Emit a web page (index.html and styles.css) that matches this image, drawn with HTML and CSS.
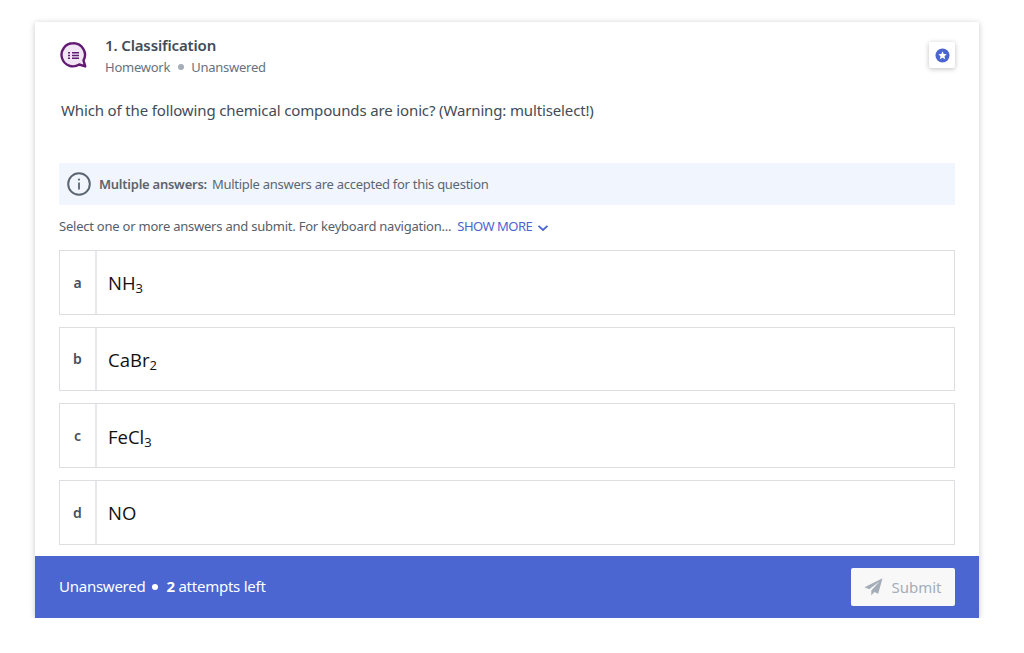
FILE: index.html
```html
<!DOCTYPE html>
<html lang="en">
<head>
  <meta charset="utf-8">
  <title>Classification</title>
  <link rel="stylesheet" href="styles.css">
</head>
<body>
  <div class="card">
    <div class="head">
      <svg class="q-icon" width="28" height="28" viewBox="0 0 28 28">
        <path d="M14 1.300a11.500 11.500 0 1 0 6.200 21.200l6 1.900-1.700-6A11.500 11.500 0 0 0 14 1.300z" fill="#f1e6f3" stroke="#621a73" stroke-width="2.400" stroke-linejoin="round"/>
        <path d="M13 10.700h7M13 13.500h7M13 16.300h7M9 10.700h2M9 13.500h2M9 16.300h2" stroke="#621a73" stroke-width="1.500" fill="none"/>
      </svg>
      <div class="head-text">
        <div class="q-title">1. Classification</div>
        <div class="q-meta"><span>Homework</span><i class="dot"></i><span>Unanswered</span></div>
      </div>
      <div class="star-btn">
        <svg width="15" height="15" viewBox="0 0 15 15">
          <circle cx="7.500" cy="7.500" r="7" fill="#4b65d1"/>
          <path d="M7.500 3.300l1.250 2.700 2.950.35-2.200 2 .6 2.900-2.600-1.450-2.600 1.450.6-2.900-2.200-2 2.950-.35z" fill="#fff"/>
        </svg>
      </div>
    </div>

    <p class="question">Which of the following chemical compounds are ionic? (Warning: multiselect!)</p>

    <div class="notice">
      <svg width="24" height="24" viewBox="0 0 24 24">
        <circle cx="12" cy="12" r="10.800" fill="none" stroke="#5b6672" stroke-width="2"/>
        <path d="M12 10.500v7" stroke="#5b6672" stroke-width="1.800"/>
        <circle cx="12" cy="7.600" r="1.100" fill="#5b6672"/>
      </svg>
      <b>Multiple answers:</b>
      <span>Multiple answers are accepted for this question</span>
    </div>

    <div class="hint">
      <span>Select one or more answers and submit. For keyboard navigation...</span>
      <a class="more">SHOW MORE
        <svg width="12" height="8" viewBox="0 0 12 8"><path d="M1.500 1.800L6 6l4.500-4.200" fill="none" stroke="#4b65d1" stroke-width="1.800"/></svg>
      </a>
    </div>

    <div class="options">
      <div class="option"><div class="letter">a</div><div class="answer">NH<sub>3</sub></div></div>
      <div class="option"><div class="letter">b</div><div class="answer">CaBr<sub>2</sub></div></div>
      <div class="option"><div class="letter">c</div><div class="answer">FeCl<sub>3</sub></div></div>
      <div class="option"><div class="letter">d</div><div class="answer">NO</div></div>
    </div>

    <div class="foot">
      <div class="status">Unanswered<i class="foot-dot"></i><b>2</b>&nbsp;attempts left</div>
      <button class="submit">
        <svg width="19" height="18" viewBox="0 0 19 18"><path d="M18.500.300L.500 9.200l4.700 2.100L15.500 3.500 7.300 12.400v5.200l3-3.600 3.900 1.800z" fill="#a4adb8"/></svg>
        Submit
      </button>
    </div>
  </div>
</body>
</html>
```

FILE: styles.css
```css
* { box-sizing: border-box; }

body {
  margin: 0;
  padding: 22px 45px 0 35px;
  background: #fff;
  font-family: "Noto Sans", sans-serif;
  color: #3d4752;
}

.card {
  background: #fff;
  box-shadow: 0 1px 6px rgba(0, 0, 0, .22);
  height: 596px;
  display: flex;
  flex-direction: column;
}

.head {
  display: flex;
  align-items: flex-start;
  padding: 13px 24px 0;
  height: 71px;
}
.q-icon { flex: none; margin-top: 7px; }
.head-text { margin-left: 18px; flex: 1; }
.q-title {
  font-size: 15px;
  font-weight: 600;
  line-height: 20px;
  letter-spacing: -.14px;
  color: #414c58;
}
.q-meta {
  display: flex;
  align-items: center;
  margin-top: 3px;
  font-size: 13px;
  line-height: 18px;
  letter-spacing: -.25px;
  color: #68727e;
}
.dot {
  width: 6px;
  height: 6px;
  margin: 0 7px 0 8px;
  border-radius: 50%;
  background: #a4adb8;
}
.star-btn {
  width: 26px;
  height: 26px;
  margin-top: 7px;
  border-radius: 2px;
  background: #fff;
  box-shadow: 0 1px 5px rgba(0, 0, 0, .25);
  display: flex;
  align-items: center;
  justify-content: center;
}

.question {
  margin: 0 24px 0 26px;
  height: 70px;
  padding-top: 6px;
  font-size: 15px;
  line-height: 22px;
  letter-spacing: -.14px;
  color: #414c58;
}

.notice {
  display: flex;
  align-items: center;
  margin: 0 24px;
  height: 42px;
  padding-left: 8px;
  background: #f1f6fe;
  font-size: 13px;
  letter-spacing: -.27px;
  color: #5c6672;
}
.notice b { margin: 0 5px 0 8px; font-weight: 600; color: #5e636c; letter-spacing: -.25px; }

.hint {
  display: flex;
  align-items: center;
  margin: 0 24px;
  height: 45px;
  padding-bottom: 4px;
  font-size: 13px;
  letter-spacing: -.23px;
  color: #56606b;
}
.more { margin-left: 6px; color: #4b65d1; letter-spacing: -.5px; }
.more svg { margin-left: 2px; vertical-align: -1px; }

.options {
  flex: 1;
  margin: 0 24px;
  display: flex;
  flex-direction: column;
  gap: 12px;
}
.option {
  height: 64.670px;
  display: flex;
  border: 1px solid #dcdee1;
}
.letter {
  width: 37px;
  border-right: 2px solid #e6e8ea;
  display: flex;
  align-items: center;
  justify-content: center;
  font-size: 14px;
  font-weight: 600;
  color: #46505c;
}
.answer {
  display: flex;
  align-items: center;
  padding: 1px 0 0 11px;
  font-family: "Open Sans", sans-serif;
  font-size: 18.500px;
  color: #111;
}
.answer sub { font-size: 13px; align-self: center; margin-top: 11px; }

.foot {
  height: 62px;
  padding: 0 24px;
  background: #4b65d1;
  display: flex;
  align-items: center;
  justify-content: space-between;
}
.status {
  display: flex;
  align-items: center;
  padding-bottom: 2px;
  font-size: 15px;
  letter-spacing: -.25px;
  color: #fff;
}
.status b { font-weight: 700; }
.foot-dot {
  width: 6px;
  height: 6px;
  margin: 2px 8px 0 7px;
  border-radius: 50%;
  background: #fff;
}
.submit {
  width: 104px;
  height: 38px;
  border: 0;
  border-radius: 2px;
  background: #f8f8f9;
  display: flex;
  align-items: center;
  justify-content: center;
  gap: 8px;
  font-family: inherit;
  font-size: 15px;
  color: #a4adb8;
}
```
